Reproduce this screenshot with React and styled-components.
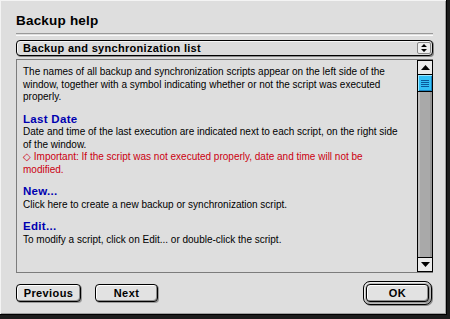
import React from 'react';
import styled, { createGlobalStyle } from 'styled-components';

const Global = createGlobalStyle`
    html, body {
        margin: 0;
        padding: 0;
        background: #1c1c1c;
    }
    body {
        width: 450px;
        height: 319px;
        overflow: hidden;
    }
`;

const Window = styled.div`
    width: 447px;
    height: 315px;
    box-sizing: border-box;
    background: #dedede;
    border-right: 1px solid #000;
    border-bottom: 1px solid #000;
    box-shadow: inset 1px 1px 0 #f4f4f4, inset -1px -1px 0 #a0a0a0;
    padding: 0 13px 0 16px;
    display: flex;
    flex-direction: column;
    font-family: "Liberation Sans", Arial, sans-serif;
`;

const Title = styled.div`
    height: 32px;
    line-height: 41px;
    font-size: 13.5px;
    font-weight: bold;
    color: #000;
    letter-spacing: 0.2px;
`;

const Separator = styled.div`
    height: 1px;
    border-top: 1px solid #9a9a9a;
    border-bottom: 1px solid #fafafa;
    margin: 1px 0 4px;
`;

const Popup = styled.div`
    height: 16px;
    box-sizing: border-box;
    border: 1px solid #000;
    border-radius: 4px;
    background: #dcdcdc;
    box-shadow: 1px 1px 0 #8a8a8a, inset 1px 1px 0 #f6f6f6;
    display: flex;
    align-items: center;
    justify-content: space-between;
    padding: 0 1px 0 6px;
    font-size: 11px;
    font-weight: bold;
    letter-spacing: 0.3px;
`;

const PopupArrows = styled.div`
    width: 14px;
    height: 12px;
    box-sizing: border-box;
    border: 1px solid #888;
    border-radius: 2px;
    background: #eeeeee;
    display: flex;
    align-items: center;
    justify-content: center;
`;

const TextBox = styled.div`
    margin-top: 3px;
    height: 214px;
    box-sizing: border-box;
    border: 1px solid #7c7c7c;
    border-right: none;
    display: flex;
`;

const Content = styled.div`
    flex: 1;
    padding: 6px 6px 0 6px;
    font-size: 10px;
    line-height: 12.5px;
    color: #000;
    white-space: nowrap;
`;

const Para = styled.p`
    margin: 0 0 9px;
`;

const Heading = styled.div`
    color: #0000b0;
    font-weight: bold;
    font-size: 11.5px;
    line-height: 13.5px;
    letter-spacing: 0.3px;
`;

const Warn = styled.span`
    color: #cc0010;
`;

const Scrollbar = styled.div`
    width: 16px;
    box-sizing: border-box;
    border: 1px solid #000;
    display: flex;
    flex-direction: column;
    background: #a9a9a9;
    box-shadow: inset 2px 0 0 #bdbdbd, inset -2px 0 0 #939393;
`;

const Arrow = styled.div`
    height: 13px;
    background: #eaeaea;
    border-${p => (p.$down ? 'top' : 'bottom')}: 1px solid #000;
    display: flex;
    align-items: center;
    justify-content: center;
`;

const Thumb = styled.div`
    height: 16px;
    border-bottom: 1px solid #000;
    background: #33c0f6;
    box-shadow: inset 1px 1px 0 #9fe6ff, inset -1px -1px 0 #1a84c0;
    display: flex;
    flex-direction: column;
    align-items: center;
    justify-content: center;
    gap: 1px;
`;

const Grip = styled.div`
    width: 8px;
    height: 1px;
    background: #0a5a9a;
`;

const Track = styled.div`
    flex: 1;
`;

const Footer = styled.div`
    flex: 1;
    display: flex;
    align-items: center;
    padding-bottom: 1px;
`;

const Button = styled.button`
    height: 18px;
    width: ${p => p.$w}px;
    margin-right: 14px;
    padding: 0;
    border: 1px solid #000;
    border-radius: 4px;
    background: #e2e2e2;
    box-shadow: inset 1px 1px 0 #ffffff, inset -1px -1px 0 #8c8c8c, 1px 1px 0 #9a9a9a;
    font-family: "Liberation Sans", Arial, sans-serif;
    font-size: 11px;
    font-weight: bold;
    letter-spacing: 0.4px;
    color: #000;
`;

const DefaultRing = styled.div`
    margin-left: auto;
    margin-right: 1px;
    padding: 2px;
    border: 1px solid #000;
    border-radius: 7px;
    background: #bcbcbc;
    box-shadow: inset 1px 1px 0 #eee, 1px 1px 0 #8a8a8a;
    display: flex;
`;

const OkButton = styled(Button)`
    margin: 0;
`;

const UpDown = () => (
    <svg width="8" height="10" viewBox="0 0 8 10">
        <path d="M4 1 L7 4 L1 4 Z M4 9 L7 6 L1 6 Z" fill="#000" />
    </svg>
);

const Tri = ({ down }) => (
    <svg width="9" height="5" viewBox="0 0 9 5">
        <path d={down ? 'M0 0 L9 0 L4.5 5 Z' : 'M0 5 L9 5 L4.5 0 Z'} fill="#000" />
    </svg>
);

export default function App() {
    return (
        <>
            <Global />
            <Window>
                <Title>Backup help</Title>
                <Separator />
                <Popup>
                    <span>Backup and synchronization list</span>
                    <PopupArrows><UpDown /></PopupArrows>
                </Popup>
                <TextBox>
                    <Content>
                        <Para>
                            The names of all backup and synchronization scripts appear on the left side of the<br />
                            window, together with a symbol indicating whether or not the script was executed<br />
                            properly.
                        </Para>
                        <Heading>Last Date</Heading>
                        <Para>
                            Date and time of the last execution are indicated next to each script, on the right side<br />
                            of the window.<br />
                            <Warn>◇ Important: If the script was not executed properly, date and time will not be<br />
                            modified.</Warn>
                        </Para>
                        <Heading>New...</Heading>
                        <Para>Click here to create a new backup or synchronization script.</Para>
                        <Heading>Edit...</Heading>
                        <Para>To modify a script, click on Edit... or double-click the script.</Para>
                    </Content>
                    <Scrollbar>
                        <Arrow><Tri /></Arrow>
                        <Thumb><Grip /><Grip /><Grip /><Grip /></Thumb>
                        <Track />
                        <Arrow $down><Tri down /></Arrow>
                    </Scrollbar>
                </TextBox>
                <Footer>
                    <Button $w={65}>Previous</Button>
                    <Button $w={63}>Next</Button>
                    <DefaultRing>
                        <OkButton $w={63}>OK</OkButton>
                    </DefaultRing>
                </Footer>
            </Window>
        </>
    );
}
